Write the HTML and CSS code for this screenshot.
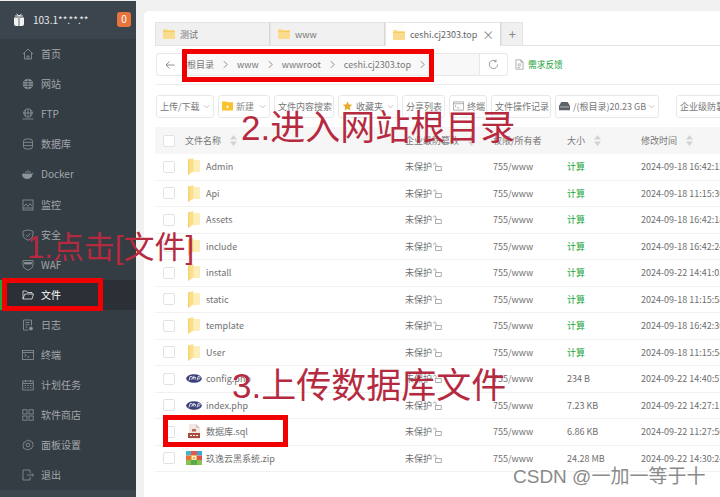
FILE: index.html
```html
<!DOCTYPE html>
<html lang="zh-CN">
<head>
<meta charset="utf-8">
<title>文件</title>
<link rel="stylesheet" href="styles.css">
</head>
<body>
<svg class="defs" width="0" height="0" aria-hidden="true">
  <symbol id="folder" viewBox="0 0 12 17"><path d="M4.5 2 H11.3 Q12 2 12 2.8 V13.2 Q12 14 11.3 14 H4.5 Z" fill="#fdeeb8"/><path d="M0 1.6 L4.6 .2 Q5.4 0 5.4 1 V13.6 L0 17 Z" fill="#fadf8c"/><path d="M0 1.6 L1.4 1.2 V16 L0 17 Z" fill="#f6d272"/></symbol>
  <symbol id="tabfolder" viewBox="0 0 12 10"><path d="M0 1 Q0 0 1 0 L4 0 L5 1 L11 1 Q12 1 12 2 L12 9 Q12 10 11 10 L1 10 Q0 10 0 9 Z" fill="#fbdc8e"/><rect x="0" y="2" width="12" height="1" fill="#f6cb63"/></symbol>
  <symbol id="php" viewBox="0 0 16 9"><ellipse cx="8" cy="4.5" rx="7.8" ry="4.3" fill="#3a3f78"/><path d="M3 6.5 L4 2.6 H6 Q7 3 6.6 4.3 Q6 5.3 4.7 5 M8 1.8 L7 5.6 M7.6 3.4 H9.6 L9 5.6 M11 6.5 L12 2.6 H13.5 Q14.4 3 14 4.3 Q13.5 5.3 12 5" fill="none" stroke="#fff" stroke-width=".8"/></symbol>
  <symbol id="lock" viewBox="0 0 9 9"><path d="M3 4.5 V2.5 Q3 1 1.8 1 Q.6 1 .6 2.5 M2.5 4.5 H8.3 V8.5 H2.5 Z" fill="none" stroke="#999" stroke-width=".8"/></symbol>
  <symbol id="sort" viewBox="0 0 7 11"><path d="M3.5 0 L7 4.5 H0 Z M3.5 11 L0 6.5 H7 Z" fill="#d3d3d3"/></symbol>
  <symbol id="chev" viewBox="0 0 8 8"><path d="M1 2.5 L4 5.5 L7 2.5" fill="none" stroke="#aaa" stroke-width=".8"/></symbol>
  <symbol id="crumb" viewBox="0 0 6 10"><path d="M1 1 L5 5 L1 9" fill="none" stroke="#777" stroke-width="1"/></symbol>
</svg>
<div class="app">
  <aside class="sidebar">
    <header class="brand">
      <svg class="brand-logo" viewBox="0 0 12 14"><path d="M1 4.5 H11 V11 Q11 13 9 13 H3 Q1 13 1 11 Z" fill="#f2f2f2"/><path d="M2 3 L10 3 M3.5 1 L6 3 L8.5 1 M6 4 V13" stroke="#f2f2f2" stroke-width="1" fill="none"/><path d="M6 4.5 V13" stroke="#3b444d" stroke-width=".8"/></svg>
      <span class="brand-ip">103.1**.**.**</span>
      <span class="badge">0</span>
    </header>
    <nav class="menu">
      <a class="item"><svg class="ico" viewBox="0 0 12 12"><path d="M1 6 L6 1 L11 6 M2.5 5 V11 H9.5 V5 M5 11 V8 H7 V11"/></svg>首页</a>
      <a class="item"><svg class="ico" viewBox="0 0 12 12"><circle cx="6" cy="6" r="4.8" fill="#8f959a"/><path d="M1 6 H11 M6 1 V11 M2 3.6 H10 M2 8.4 H10" stroke="#343c44"/></svg>网站</a>
      <a class="item"><svg class="ico" viewBox="0 0 12 12"><circle cx="6" cy="5" r="4.2"/><path d="M1 5 H11 M6 1 V9 M.5 11 H11.5 M3.5 1.8 Q2.5 5 3.5 8.3 M8.5 1.8 Q9.5 5 8.5 8.3"/></svg>FTP</a>
      <a class="item"><svg class="ico" viewBox="0 0 12 12"><rect x="1.5" y="1" width="9" height="10" rx="2.5"/><path d="M1.5 4.3 H10.5 M1.5 7.6 H10.5"/></svg>数据库</a>
      <a class="item"><svg class="ico" viewBox="0 0 12 12"><path d="M.5 6 H10 Q10 10.5 5 10.5 Q.5 10.5 .5 6 Z" fill="#8f959a"/><path d="M4 5 V3 M6 5 V1.8 M8 5 V3 M10 6 L11.5 4.8"/></svg>Docker</a>
      <a class="item"><svg class="ico" viewBox="0 0 12 12"><rect x="1" y="1" width="10" height="10"/><path d="M2 7 L4 5 L6 7.5 L8 4.5 L10 7 M1 9 H11"/></svg>监控</a>
      <a class="item"><svg class="ico" viewBox="0 0 12 12"><path d="M6 .8 L11 2.3 V6 Q11 9.5 6 11.3 Q1 9.5 1 6 V2.3 Z M3.8 6 L5.5 7.6 L8.4 4.4"/></svg>安全</a>
      <a class="item"><svg class="ico" viewBox="0 0 12 12"><path d="M1 1.5 H11 V6 Q11 9.5 6 11.3 Q1 9.5 1 6 Z"/><path d="M2.5 3.5 H9.5 V5 H2.5 Z" fill="#8f959a"/></svg>WAF</a>
      <a class="item item-active"><svg class="ico ico-active" viewBox="0 0 12 12"><path d="M1 10 V2 H4.5 L5.5 3.5 H10 V5 M1 10 L2.8 5 H11.5 L10 10 Z"/></svg>文件</a>
      <a class="item"><svg class="ico" viewBox="0 0 12 12"><path d="M9.5 6.5 V1 H1.5 V11 H6.5 M3.5 3.5 H7.5 M3.5 5.7 H7.5 M3.5 8 H5.5"/><circle cx="9" cy="9.5" r="1.5" fill="#8f959a"/></svg>日志</a>
      <a class="item"><svg class="ico" viewBox="0 0 12 12"><rect x=".5" y="1.5" width="11" height="9"/><path d="M.5 3.5 H11.5 M2.5 5 L4.2 6.3 L2.5 7.6 M5 8 H7.5"/></svg>终端</a>
      <a class="item"><svg class="ico" viewBox="0 0 12 12"><rect x=".8" y="2" width="10.4" height="9"/><path d="M.8 4.5 H11.2 M3.5 .8 V3 M8.5 .8 V3 M2.5 6.5 H4 M5.3 6.5 H6.8 M8 6.5 H9.5 M2.5 8.7 H4 M5.3 8.7 H6.8 M8 8.7 H9.5"/></svg>计划任务</a>
      <a class="item"><svg class="ico" viewBox="0 0 12 12"><rect x=".8" y=".8" width="4.2" height="4.2"/><rect x="7" y=".8" width="4.2" height="4.2"/><rect x=".8" y="7" width="4.2" height="4.2"/><rect x="7" y="7" width="4.2" height="4.2"/></svg>软件商店</a>
      <a class="item"><svg class="ico" viewBox="0 0 12 12"><circle cx="6" cy="6" r="1.8"/><path d="M6 1 L7.2 2 L8.8 1.7 L9.5 3.1 L11 3.8 L10.6 5.4 L11.3 6.8 L10 7.9 L9.8 9.5 L8.2 9.7 L7 11 L5.6 10.4 L4 10.9 L3 9.6 L1.4 9.2 L1.5 7.6 L.7 6.2 L1.8 5 L1.8 3.4 L3.4 3 L4.4 1.7 Z"/></svg>面板设置</a>
      <a class="item"><svg class="ico" viewBox="0 0 12 12"><path d="M8 4 V1 H1 V11 H8 V8 M5 6 H11.5 M9.8 4.3 L11.5 6 L9.8 7.7"/></svg>退出</a>
    </nav>
    <div class="sidebar-foot"></div>
  </aside>

  <main class="main">
    <section class="card">
      <div class="tabs">
        <div class="tab"><svg class="tab-ico"><use href="#tabfolder"/></svg>测试</div>
        <div class="tab"><svg class="tab-ico"><use href="#tabfolder"/></svg>www</div>
        <div class="tab tab-active"><svg class="tab-ico"><use href="#tabfolder"/></svg>ceshi.cj2303.top<span class="tab-close">×</span></div>
        <div class="tab-add">+</div>
      </div>

      <div class="pathbar">
        <div class="path">
          <span class="back"><svg viewBox="0 0 10 10"><path d="M9.5 5 H1 M4.5 1.5 L1 5 L4.5 8.5"/></svg></span>
          <div class="crumbs">
            <span class="crumb">根目录</span><svg class="sep"><use href="#crumb"/></svg>
            <span class="crumb">www</span><svg class="sep"><use href="#crumb"/></svg>
            <span class="crumb">wwwroot</span><svg class="sep"><use href="#crumb"/></svg>
            <span class="crumb">ceshi.cj2303.top</span><svg class="sep"><use href="#crumb"/></svg>
          </div>
          <span class="refresh"><svg viewBox="0 0 12 12"><path d="M10.5 6 A4.5 4.5 0 1 1 8.5 2.2 M8.8 .6 V3 H6.6"/></svg></span>
        </div>
        <a class="feedback"><svg viewBox="0 0 10 12"><path d="M6.5 .8 H1 V11.2 H9 V3.3 Z M6.5 .8 V3.3 H9 M2.8 5.5 H7 M2.8 7.5 H7 M2.8 9.5 H5.5"/></svg>需求反馈</a>
      </div>

      <div class="toolbar">
        <span class="btn btn-upload">上传/下载<svg class="chev"><use href="#chev"/></svg></span>
        <span class="btn btn-new"><svg class="btn-ico" viewBox="0 0 12 10"><path d="M0 0 H5 L6 1 H12 V10 H0 Z" fill="#f9c22e"/><path d="M4.5 6 H7.5 M6 4.5 V7.5" stroke="#fff"/></svg><span class="soft">新建</span><svg class="chev"><use href="#chev"/></svg></span>
        <span class="btn btn-search">文件内容搜索</span>
        <span class="btn btn-fav"><svg class="btn-ico" viewBox="0 0 12 12"><path d="M6 .5 L7.7 4.2 L11.7 4.6 L8.7 7.3 L9.6 11.3 L6 9.2 L2.4 11.3 L3.3 7.3 L.3 4.6 L4.3 4.2 Z" fill="#e7a92a"/></svg>收藏夹<svg class="chev"><use href="#chev"/></svg></span>
        <span class="btn btn-share">分享列表</span>
        <span class="btn btn-term"><svg class="btn-ico term-ico" viewBox="0 0 12 10"><path d="M.5 .5 H11.5 V9.5 H.5 Z M.5 2.5 H11.5 M2 4 L3.5 5.2 L2 6.4 M4.5 7 H7" fill="none" stroke="#888" stroke-width=".7"/></svg>终端</span>
        <span class="btn btn-log">文件操作记录</span>
        <span class="btn btn-disk"><svg class="btn-ico" viewBox="0 0 12 9"><path d="M2.5 0 H9.5 L12 4.5 V9 H0 V4.5 Z" fill="#5b6168"/><path d="M1 5.5 H11" stroke="#fff" stroke-width=".6"/></svg>/(根目录)20.23 GB<svg class="chev"><use href="#chev"/></svg></span>
        <span class="divider"></span>
        <span class="btn btn-guard">企业级防篡改</span>
      </div>

      <div class="table">
        <div class="row head">
          <span class="check"></span>
          <span class="c-name head-name">文件名称<svg class="sort"><use href="#sort"/></svg></span>
          <span class="c-prot">企业级防篡改<svg class="sort"><use href="#sort"/></svg></span>
          <span class="c-perm">权限/所有者</span>
          <span class="c-size">大小<svg class="sort"><use href="#sort"/></svg></span>
          <span class="c-time">修改时间<svg class="sort"><use href="#sort"/></svg></span>
        </div>

        <div class="row"><span class="check"></span><span class="c-icon"><svg class="f-ico"><use href="#folder"/></svg></span><span class="c-file">Admin</span><span class="c-prot">未保护<svg class="lock"><use href="#lock"/></svg></span><span class="c-perm">755/www</span><span class="c-size calc">计算</span><span class="c-time">2024-09-18 16:42:12</span></div>
        <div class="row"><span class="check"></span><span class="c-icon"><svg class="f-ico"><use href="#folder"/></svg></span><span class="c-file">Api</span><span class="c-prot">未保护<svg class="lock"><use href="#lock"/></svg></span><span class="c-perm">755/www</span><span class="c-size calc">计算</span><span class="c-time">2024-09-18 11:15:30</span></div>
        <div class="row"><span class="check"></span><span class="c-icon"><svg class="f-ico"><use href="#folder"/></svg></span><span class="c-file">Assets</span><span class="c-prot">未保护<svg class="lock"><use href="#lock"/></svg></span><span class="c-perm">755/www</span><span class="c-size calc">计算</span><span class="c-time">2024-09-18 16:42:18</span></div>
        <div class="row"><span class="check"></span><span class="c-icon"><svg class="f-ico"><use href="#folder"/></svg></span><span class="c-file">include</span><span class="c-prot">未保护<svg class="lock"><use href="#lock"/></svg></span><span class="c-perm">755/www</span><span class="c-size calc">计算</span><span class="c-time">2024-09-18 16:42:24</span></div>
        <div class="row"><span class="check"></span><span class="c-icon"><svg class="f-ico"><use href="#folder"/></svg></span><span class="c-file">install</span><span class="c-prot">未保护<svg class="lock"><use href="#lock"/></svg></span><span class="c-perm">755/www</span><span class="c-size calc">计算</span><span class="c-time">2024-09-22 14:41:03</span></div>
        <div class="row"><span class="check"></span><span class="c-icon"><svg class="f-ico"><use href="#folder"/></svg></span><span class="c-file">static</span><span class="c-prot">未保护<svg class="lock"><use href="#lock"/></svg></span><span class="c-perm">755/www</span><span class="c-size calc">计算</span><span class="c-time">2024-09-18 11:15:58</span></div>
        <div class="row"><span class="check"></span><span class="c-icon"><svg class="f-ico"><use href="#folder"/></svg></span><span class="c-file">template</span><span class="c-prot">未保护<svg class="lock"><use href="#lock"/></svg></span><span class="c-perm">755/www</span><span class="c-size calc">计算</span><span class="c-time">2024-09-18 16:42:36</span></div>
        <div class="row"><span class="check"></span><span class="c-icon"><svg class="f-ico"><use href="#folder"/></svg></span><span class="c-file">User</span><span class="c-prot">未保护<svg class="lock"><use href="#lock"/></svg></span><span class="c-perm">755/www</span><span class="c-size calc">计算</span><span class="c-time">2024-09-18 11:15:54</span></div>
        <div class="row"><span class="check"></span><span class="c-icon"><svg class="php-ico"><use href="#php"/></svg></span><span class="c-file">config.php</span><span class="c-prot">未保护<svg class="lock"><use href="#lock"/></svg></span><span class="c-perm">755/www</span><span class="c-size">234 B</span><span class="c-time">2024-09-22 14:40:57</span></div>
        <div class="row"><span class="check"></span><span class="c-icon"><svg class="php-ico"><use href="#php"/></svg></span><span class="c-file">index.php</span><span class="c-prot">未保护<svg class="lock"><use href="#lock"/></svg></span><span class="c-perm">755/www</span><span class="c-size">7.23 KB</span><span class="c-time">2024-09-22 14:27:11</span></div>
        <div class="row"><span class="check"></span><span class="c-icon"><svg class="sql-ico" viewBox="0 0 12 15"><path d="M1 0 H8 L12 4 V15 H1 Z" fill="#f1e7e4"/><path d="M8 0 L12 4 H8 Z" fill="#d9c6c0"/><rect x="0" y="9" width="12" height="5" fill="#a8493d"/><rect x="4" y="5" width="4" height="2.5" fill="#b9695e"/><path d="M2 11.5 H10" stroke="#fff" stroke-width="1" stroke-dasharray="2 1"/></svg></span><span class="c-file">数据库.sql</span><span class="c-prot">未保护<svg class="lock"><use href="#lock"/></svg></span><span class="c-perm">755/www</span><span class="c-size">6.86 KB</span><span class="c-time">2024-09-22 11:27:50</span></div>
        <div class="row"><span class="check"></span><span class="c-icon"><svg class="zip-ico" viewBox="0 0 16 14"><rect width="5" height="4.5" fill="#45b6c9"/><rect x="5" width="6" height="4.5" fill="#e0594d"/><rect x="11" width="5" height="4.5" fill="#3da5d9"/><rect y="4.5" width="5" height="4.5" fill="#e5723f"/><rect x="5" y="4.5" width="6" height="4.5" fill="#f4b942"/><rect x="11" y="4.5" width="5" height="4.5" fill="#d9534f"/><rect y="9" width="5" height="5" fill="#8cc152"/><rect x="5" y="9" width="6" height="5" fill="#5ba84a"/><rect x="11" y="9" width="5" height="5" fill="#8cc152"/><rect x="6.3" y="5.5" width="3.4" height="3" fill="none" stroke="#fff" stroke-width=".7"/></svg></span><span class="c-file">玖逸云黑系统.zip</span><span class="c-prot">未保护<svg class="lock"><use href="#lock"/></svg></span><span class="c-perm">755/www</span><span class="c-size">24.28 MB</span><span class="c-time">2024-09-22 14:30:24</span></div>
      </div>
    </section>
  </main>

  <div class="mark box-1"></div>
  <div class="mark box-2"></div>
  <div class="mark box-3"></div>
  <div class="note note-1">1.点击[文件]</div>
  <div class="note note-2">2.进入网站根目录</div>
  <div class="note note-3">3.上传数据库文件</div>
  <div class="watermark">CSDN @一加一等于十</div>
</div>
</body>
</html>
```

FILE: styles.css
```css
* { box-sizing: border-box; }
html, body { margin: 0; padding: 0; }
body {
  width: 720px;
  height: 497px;
  overflow: hidden;
  background: #f1f1f1;
  font-family: "Noto Sans CJK SC", "Noto Sans", sans-serif;
  font-size: 9px;
  color: #666;
}
.defs { position: absolute; }
.app {
  position: relative;
  display: flex;
  width: 720px;
  height: 497px;
  overflow: hidden;
}

/* sidebar */
.sidebar {
  flex: 0 0 136px;
  display: flex;
  flex-direction: column;
  margin-top: 1px;
  background: #343c44;
  color: #a3a7ab;
  font-size: 10px;
}
.brand {
  flex: 0 0 38px;
  display: flex;
  align-items: center;
  padding: 0 5px 1px 13px;
  background: #3c454e;
  color: #e6e8ea;
}
.brand-logo { width: 12px; height: 14px; margin-right: 8px; }
.brand-ip { flex: 1; font-size: 10px; }
.badge {
  width: 14px;
  height: 15px;
  line-height: 14px;
  text-align: center;
  border-radius: 3px;
  background: #e8743b;
  color: #fff;
  font-size: 10px;
}
.menu { flex: 1; display: flex; flex-direction: column; }
.item {
  flex: 0 0 30.1px;
  display: flex;
  align-items: center;
  padding-left: 22px;
  gap: 7px;
  line-height: 1;
}
.item-active {
  background: #2b3036;
  color: #fff;
  border-left: 2px solid #20a53a;
  padding-left: 20px;
}
.ico {
  width: 12px;
  height: 12px;
  fill: none;
  stroke: #8f959a;
  stroke-width: .8;
}
.ico-active { stroke: #e6e8ea; }
.sidebar-foot { flex: 0 0 7px; background: #3c454e; }

/* main */
.main { flex: 1; min-width: 0; padding: 11px 0 0 8px; }
.card {
  height: 100%;
  padding: 11px 0 0 11px;
  background: #fff;
  border-radius: 5px 0 0 0;
}

/* tabs */
.tabs {
  display: flex;
  height: 24px;
  border-bottom: 1px solid #e4e4e4;
}
.tab {
  flex: 0 0 115px;
  display: flex;
  align-items: center;
  padding-left: 7px;
  gap: 5px;
  background: #f0f0f0;
  border: 1px solid #e4e4e4;
  border-right-color: #d8d8d8;
  border-bottom: 0;
  font-size: 9px;
  color: #777;
}
.tab-active {
  position: relative;
  background: #fff;
  margin-bottom: -1px;
  color: #666;
}
.tab-ico { width: 12px; height: 10px; }
.tab-close { margin-left: auto; margin-right: 6px; font-size: 12px; color: #888; }
.tab-add {
  flex: 0 0 22px;
  text-align: center;
  line-height: 22px;
  background: #f0f0f0;
  border: 1px solid #e4e4e4;
  border-bottom: 0;
  font-size: 13px;
  color: #888;
}

/* path */
.pathbar {
  display: flex;
  align-items: center;
  height: 39px;
  padding: 7px 0 8px 1px;
  border-bottom: 1px solid #eee;
}
.path {
  display: flex;
  align-items: stretch;
  width: 352px;
  height: 23px;
  border: 1px solid #e8e8e8;
  border-radius: 3px;
}
.back { flex: 0 0 26px; display: flex; align-items: center; justify-content: center; }
.back svg, .refresh svg { fill: none; stroke: #777; stroke-width: .8; }
.back svg { width: 10px; height: 10px; }
.crumbs {
  flex: 1;
  display: flex;
  align-items: center;
  background: #f8f8f8;
  padding-left: 4px;
  color: #777;
  font-size: 9px;
}
.crumb { margin-right: 9px; }
.sep { width: 5px; height: 9px; margin-right: 9px; flex: none; }
.refresh {
  flex: 0 0 28px;
  display: flex;
  align-items: center;
  justify-content: center;
  border-left: 1px solid #e8e8e8;
}
.refresh svg { width: 11px; height: 11px; }
.feedback {
  display: flex;
  align-items: center;
  gap: 4px;
  margin-left: 7px;
  color: #20a53a;
  font-size: 8.7px;
}
.feedback svg { width: 9px; height: 11px; fill: none; stroke: #888; stroke-width: .7; }

/* toolbar */
.toolbar {
  display: flex;
  align-items: center;
  gap: 4px;
  height: 42px;
  padding: 0 0 0 1px;
  white-space: nowrap;
  overflow: hidden;
}
.btn {
  flex: none;
  display: flex;
  align-items: center;
  height: 23px;
  padding: 0 3px;
  background: #fff;
  border: 1px solid #e8e8e8;
  border-radius: 3px;
  color: #777;
  font-size: 9px;
}
.btn-upload { width: 58px; }
.btn-new { width: 52px; }
.btn-search { width: 60px; }
.btn-fav { width: 60px; }
.btn-share { width: 43px; }
.btn-term { width: 38px; }
.btn-log { width: 60px; }
.btn-disk { width: 104px; }
.btn-guard { width: 60px; margin-left: 1px; }
.soft { color: #888; }
.btn-ico { width: 11px; height: 10px; margin-right: 3px; flex: none; }
.term-ico { width: 11px; }
.chev { width: 7px; height: 7px; margin-left: auto; flex: none; }
.divider { width: 1px; height: 9px; margin: 0 2px 0 6px; background: #ddd; }

/* table */
.table { display: flex; flex-direction: column; }
.row {
  position: relative;
  display: grid;
  grid-template-columns: 25px 12px 205px 88px 74px 74px 1fr;
  align-items: center;
  height: 26.5px;
  padding-left: 8px;
  border-bottom: 1px solid #f1f1f1;
  white-space: nowrap;
  color: #6f6f6f;
}
.row > span { grid-row: 1; }
.head {
  height: 27px;
  background: #f6f6f6;
  border-bottom: 0;
  color: #777;
}
.head-name { grid-column: 2 / 4; display: flex; align-items: center; margin-left: -3px; }
.row > .c-icon { display: flex; align-items: center; justify-content: center; grid-column: 2; }
.c-file { grid-column: 3; padding-left: 6px; }
.c-prot { grid-column: 4; display: flex; align-items: center; }
.c-perm { grid-column: 5; }
.c-size { grid-column: 6; display: flex; align-items: center; }
.c-time { grid-column: 7; display: flex; align-items: center; overflow: hidden; }
.check {
  grid-column: 1;
  width: 12px;
  height: 12px;
  background: #fff;
  border: 1px solid #e2e2e2;
  border-radius: 2px;
}
.calc { color: #20a53a; }
.sort { width: 7px; height: 11px; margin-left: 8.5px; flex: none; }
.lock { width: 9px; height: 9px; margin-left: 1px; flex: none; }
.f-ico { width: 12px; height: 17px; flex: none; }
.php-ico { width: 16px; height: 9px; flex: none; }
.sql-ico { width: 12px; height: 15px; flex: none; }
.zip-ico { width: 16px; height: 14px; flex: none; }

/* annotations drawn over the screenshot */
.mark {
  position: absolute;
  border: 5px solid #f00000;
}
.box-1 { left: 2px; top: 278px; width: 101px; height: 33px; }
.box-2 { left: 182px; top: 49px; width: 252px; height: 33px; }
.box-3 { left: 163px; top: 415px; width: 125px; height: 32px; }
.note {
  position: absolute;
  color: #b62a3f;
  line-height: 1;
  white-space: nowrap;
  font-family: "Liberation Sans", "Noto Sans CJK SC", sans-serif;
}
.note-1 { left: 27px; top: 232px; font-size: 31px; }
.note-2 { left: 241px; top: 110px; font-size: 35px; }
.note-3 { left: 232px; top: 368px; font-size: 35px; }
.watermark {
  position: absolute;
  left: 513px;
  top: 466px;
  color: #8a8a8a;
  font-size: 19px;
  line-height: 1.2;
  white-space: nowrap;
  font-family: "Liberation Sans", "Noto Sans CJK SC", sans-serif;
}
```
